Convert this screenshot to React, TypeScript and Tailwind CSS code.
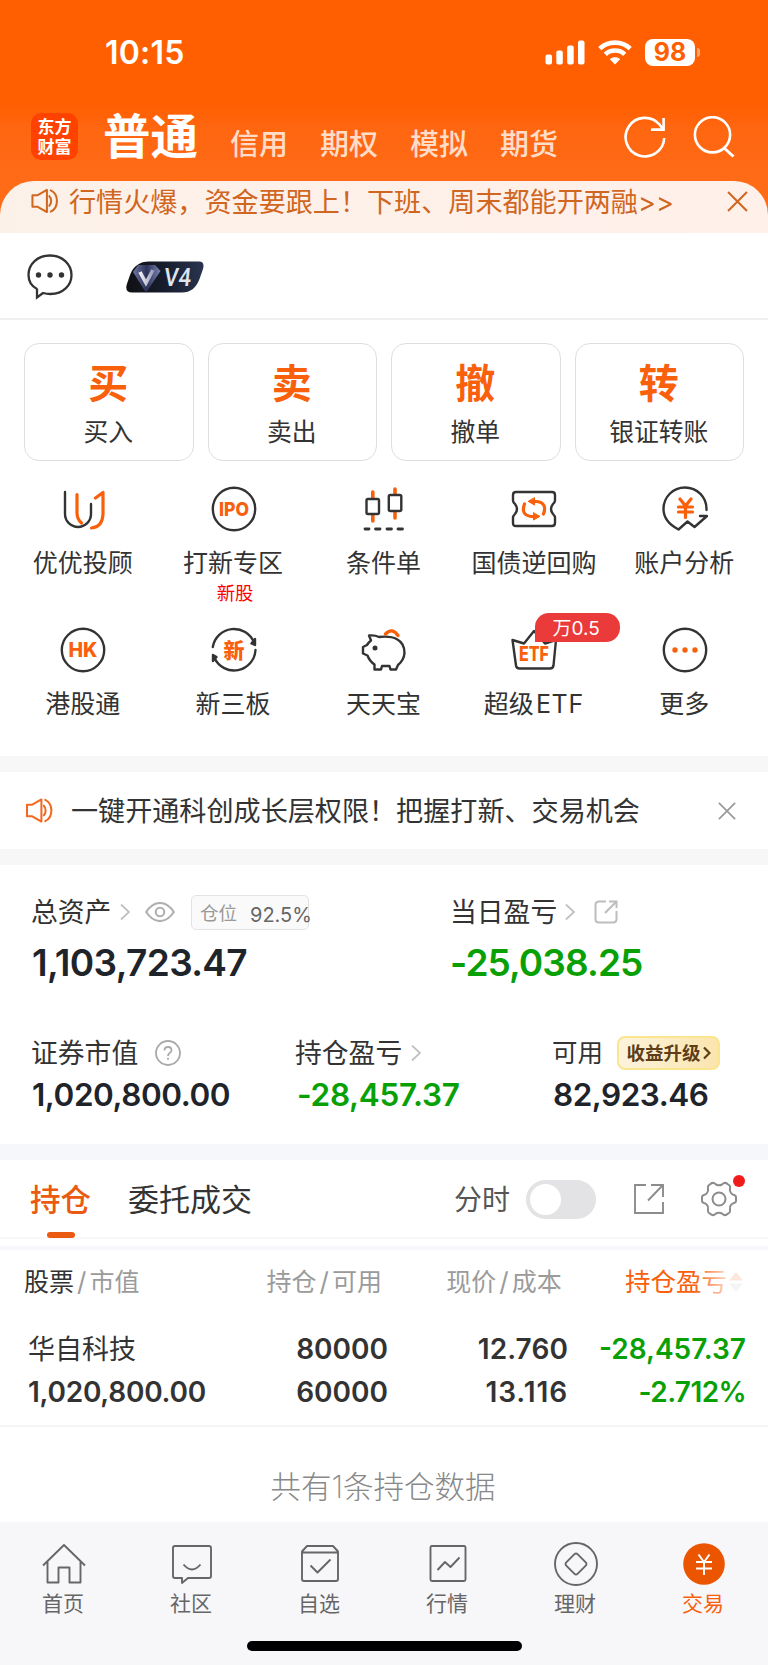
import React from 'react';

const ORANGE = '#f9600b';
const INK = '#333333';

const SpeakerIcon: React.FC<{ className?: string }> = ({ className }) => (
    <svg viewBox="0 0 28 26" fill="none" stroke="currentColor" strokeWidth="2.1" strokeLinejoin="round" className={className}>
        <path d="M1.5 7H7L16.5 1.5V24.5L7 19H1.5Z" />
        <path d="M19 8C21.5 10.5 21.5 15.5 19 18" strokeLinecap="round" />
        <path d="M20.5 2C29 6 29 20 20.5 24" strokeLinecap="round" />
    </svg>
);

const CloseIcon: React.FC<{ className?: string }> = ({ className }) => (
    <svg viewBox="0 0 20 20" fill="none" stroke="currentColor" strokeWidth="1.9" className={className}>
        <path d="M1 1L19 19M19 1L1 19" />
    </svg>
);

const Chevron: React.FC<{ className?: string }> = ({ className }) => (
    <svg viewBox="0 0 10 16" fill="none" stroke="#c0c0c0" strokeWidth="1.8" className={`w-[10px] h-4 shrink-0 ${className ?? ''}`}>
        <path d="M1 0.5L9 8L1 15.5" />
    </svg>
);

const StatusBar: React.FC = () => (
    <div className="flex items-center h-[105px] pl-[105px] pr-[68px] text-white">
        <span className="text-[32px] font-semibold leading-none tracking-[0.2px]">10:15</span>
        <div className="ml-auto flex items-center -mt-px">
            <svg viewBox="0 0 40 25" className="w-10 h-[25px]" fill="white">
                <rect x="0.5" y="14.5" width="6.5" height="10" rx="2" />
                <rect x="11.3" y="10.5" width="6.5" height="14" rx="2" />
                <rect x="22.2" y="5.5" width="6.5" height="19" rx="2" />
                <rect x="33" y="0.5" width="6.5" height="24" rx="2" />
            </svg>
            <svg viewBox="0 0 34 25" className="ml-[13px] w-[34px] h-[25px]" fill="none" stroke="white" strokeWidth="4.6">
                <path d="M1.8 8.6C10 0.6 24 0.6 32.2 8.6" />
                <path d="M7.3 14.3C12.5 9.2 21.5 9.2 26.7 14.3" />
                <path d="M17 24.5L11.9 19.2C14.6 16.6 19.4 16.6 22.1 19.2Z" fill="white" stroke="none" />
            </svg>
            <div className="ml-[13px] w-[50px] h-[27px] rounded-[8px] bg-white flex items-center justify-center text-[25px] font-bold leading-none text-[#ff5f00]">98</div>
            <div className="ml-[2px] w-[3px] h-[9px] rounded-r-full bg-[#ffa56f]" />
        </div>
    </div>
);

const AccountTabs: React.FC = () => (
    <div className="h-[76px] flex pl-[31px] pr-[33px] pt-[8px] text-white bg-linear-to-b from-[#ff5f00] from-0% via-[#ff6610] via-30% to-[#ff6b17]">
        <div className="w-[47px] h-[47px] rounded-[10px] bg-[#ff4200] pt-[3px] text-center font-['Noto_Sans_CJK_SC',sans-serif] text-[17px] font-bold leading-[20px]">
            东方<br />财富
        </div>
        <span className="ml-[25px] text-[47.5px] font-bold leading-[47px] w-[95px]">普通</span>
        <div className="ml-[32px] mt-[17px] flex gap-[32px] text-[29px] leading-[29px] font-medium text-[#ffddc9]">
            {['信用', '期权', '模拟', '期货'].map((t) => <span key={t} className="w-[58px]">{t}</span>)}
        </div>
        <svg viewBox="0 0 42 42" className="ml-auto mt-[3px] w-[42px] h-[42px]" fill="none" stroke="white" strokeWidth="2.6">
            <path d="M40.2 22A19.3 19.3 0 1 1 35.5 8.5L39 13" />
            <path d="M39.6 2V13.6H27" />
        </svg>
        <svg viewBox="0 0 42 42" className="ml-[27px] mt-[3px] w-[42px] h-[42px]" fill="none" stroke="white" strokeWidth="2.6">
            <circle cx="19.5" cy="18.8" r="17.6" />
            <path d="M31 32L40.5 40.5" strokeWidth="3" />
        </svg>
    </div>
);

const PromoBanner: React.FC = () => (
    <div className="bg-[#ff6b17]">
        <div className="h-[52px] rounded-t-[34px] bg-linear-to-r from-[#fcf1e8] to-[#fff0ea] flex items-start pl-[31px] pr-[20px] pt-[7px] text-[#d0661f]">
            <SpeakerIcon className="w-[27px] h-[26px]" />
            <span className="ml-[11px] mt-px text-[27.1px] leading-[27px] whitespace-nowrap">行情火爆，资金要跟上！下班、周末都能开两融&gt;&gt;</span>
            <CloseIcon className="ml-auto mt-[3px] w-[21px] h-[21px]" />
        </div>
    </div>
);

const VipRow: React.FC = () => (
    <div className="h-[87px] border-b-2 border-[#efefef] flex items-center pl-[27px]">
        <svg viewBox="0 0 46 46" className="w-[46px] h-[46px] mt-[3px]" fill="none" stroke={INK} strokeWidth="2.3">
            <path d="M10 34.5V43.5L16 39C19 39.8 21 40 23.5 40C36 40 44.5 31.5 44.5 21C44.5 10 35 1.5 23 1.5C10.5 1.5 1.5 10 1.5 21C1.5 27 4.5 32 10 35" />
            <g fill={INK} stroke="none"><circle cx="11.5" cy="21" r="2.7" /><circle cx="23" cy="21" r="2.7" /><circle cx="34.5" cy="21" r="2.7" /></g>
        </svg>
        <svg viewBox="0 0 78 32" className="ml-[53px] mt-[2px] w-[78px] h-8">
            <defs>
                <linearGradient id="vip" x1="0" x2="1"><stop offset="0" stopColor="#101014" /><stop offset="0.5" stopColor="#171d2c" /><stop offset="1" stopColor="#29344f" /></linearGradient>
                <linearGradient id="gem" x1="0" x2="1"><stop offset="0" stopColor="#6d76a0" /><stop offset="0.5" stopColor="#2c3157" /><stop offset="1" stopColor="#7c86b5" /></linearGradient>
                <linearGradient id="silver" x1="0" x2="1"><stop offset="0" stopColor="#f2f2f6" /><stop offset="1" stopColor="#9a9db8" /></linearGradient>
            </defs>
            <path d="M23 0.5H73Q79 0.5 77 8L73.5 18Q68.5 31.5 56 31.5H6Q-1 31.5 0.6 24L4 14Q9 0.5 23 0.5Z" fill="url(#vip)" />
            <path d="M12 4H29L34.5 10L20 31.5L7 11Z" fill="url(#gem)" />
            <path d="M14 11L20 22L27 9" fill="none" stroke="url(#silver)" strokeWidth="3.6" />
            <text x="38" y="25" fill="#dfe4f0" fontSize="25.5" fontWeight="500" textLength="27" lengthAdjust="spacingAndGlyphs" fontFamily="Roboto, sans-serif" transform="skewX(-6) translate(2 0)">V4</text>
        </svg>
    </div>
);

const trades = [
    ['买', '买入'],
    ['卖', '卖出'],
    ['撤', '撤单'],
    ['转', '银证转账'],
];

const TradeButtons: React.FC = () => (
    <div className="mt-[23px] px-6 grid grid-cols-4 gap-[14px]">
        {trades.map(([glyph, label]) => (
            <div key={label} className="h-[118px] rounded-[15px] border-[1.5px] border-[#dedede] flex flex-col items-center pt-[20px] pr-px">
                <span className="text-[40px] leading-[40px] font-bold text-[#f9600b]">{glyph}</span>
                <span className="mt-[15px] text-[24.8px] leading-[26px] text-[#333]">{label}</span>
            </div>
        ))}
    </div>
);

const iconText = { fill: ORANGE, fontWeight: 800, textAnchor: 'middle' as const, fontFamily: 'Inter, "Noto Sans CJK SC", sans-serif' };

const services: { label: string; tag?: string; badge?: string; icon: React.ReactNode }[] = [
    {
        label: '优优投顾',
        icon: (
            <>
                <path d="M5 6V28A13 13 0 0 0 31 28V18" />
                <path d="M17 8.5V27Q17 33 21.5 37" stroke={ORANGE} strokeWidth="3.2" />
                <path d="M35.5 12L43 6.5V28Q42.5 41 31.5 42" stroke={ORANGE} strokeWidth="3.2" />
            </>
        ),
    },
    {
        label: '打新专区',
        tag: '新股',
        icon: (
            <>
                <circle cx="23" cy="23" r="21.2" />
                <text x="23" y="30" fontSize="19" stroke="none" textLength="30" lengthAdjust="spacingAndGlyphs" {...iconText}>IPO</text>
            </>
        ),
    },
    {
        label: '条件单',
        icon: (
            <>
                <path d="M11.8 6V12M11.8 29V35M34 3V8M34 26V32" stroke={ORANGE} strokeWidth="3.6" />
                <rect x="5.5" y="13" width="12.5" height="15" rx="1.5" />
                <rect x="27.8" y="9" width="12.5" height="16" rx="1.5" />
                <path d="M4 43H8M14.5 43H19M26 43H30.5M37 43H41.5" strokeWidth="2.8" />
            </>
        ),
    },
    {
        label: '国债逆回购',
        icon: (
            <>
                <path d="M5 6H41Q44 6 44 9V14.500Q44 16 42 18Q38 23 42 28Q44 30 44 31.500V37Q44 40 41 40H5Q2 40 2 37V31.500Q2 30 4 28Q8 23 4 18Q2 16 2 14.500V9Q2 6 5 6Z" />
                <path d="M13.5 18Q9.5 29 20 30.5H26M32.500 28Q36.5 17 26 15.5H20" stroke={ORANGE} strokeWidth="3.2" />
                <path d="M23.5 12V19L17.5 15.5ZM22.5 27V34L28.5 30.5Z" fill={ORANGE} stroke={ORANGE} strokeWidth="1" />
            </>
        ),
    },
    {
        label: '账户分析',
        icon: (
            <>
                <path d="M44.5 24C45 11 35 1.5 23 1.5C11 1.5 1.5 11 1.5 23C1.5 32 7 38.5 16.5 43.5L25.5 35.5L32.5 41L45 30H38" />
                <path d="M18 13L23.5 20L29 13M16.5 21H30.5M16.5 26H30.5M23.5 20V31.5" stroke={ORANGE} strokeWidth="3.2" />
            </>
        ),
    },
    {
        label: '港股通',
        icon: (
            <>
                <circle cx="23" cy="23" r="21.2" />
                <text x="23" y="30" fontSize="19.5" stroke="none" {...iconText}>HK</text>
            </>
        ),
    },
    {
        label: '新三板',
        icon: (
            <>
                <path d="M1.8 20A21.5 21.5 0 0 1 43 15.5M44.5 23A21.5 21.5 0 0 1 3.5 31" />
                <path d="M44 12V18L40.5 16.5ZM2 34V28L5.5 30Z" fill={INK} />
                <text x="23" y="30.5" fontSize="21" stroke="none" {...iconText}>新</text>
            </>
        ),
    },
    {
        label: '天天宝',
        icon: (
            <>
                <path d="M18 10C32 8.500 43.500 12 43.500 26Q43 33 37 38L35 42.500H29.500L28.500 39H21L20 42.500H13.500V37.500Q8.500 34 6.500 28.500L2 26.500V20L6 18Q8 15 10 13.500L8 8.500Q14 8 18 10Z" />
                <circle cx="14" cy="21" r="2.5" fill={INK} stroke="none" />
                <path d="M24.500 7Q31 0 37 8.500" stroke={ORANGE} strokeWidth="3.4" />
            </>
        ),
    },
    {
        label: '超级ETF',
        badge: '万0.5',
        icon: (
            <>
                <path d="M1.5 13L13 16.5L23 4L34 16.5L45 13L42.5 38.5Q42 41.5 39 41.5H8.5Q5.5 41.5 5 38.5Z" />
                <text x="23" y="34" fontSize="20" stroke="none" textLength="30" lengthAdjust="spacingAndGlyphs" {...iconText}>ETF</text>
            </>
        ),
    },
    {
        label: '更多',
        icon: (
            <>
                <circle cx="23" cy="23" r="21.2" />
                <g fill={ORANGE} stroke="none"><circle cx="13" cy="23" r="2.7" /><circle cx="23" cy="23" r="2.7" /><circle cx="33" cy="23" r="2.7" /></g>
            </>
        ),
    },
];

const ServiceGrid: React.FC = () => (
    <div className="mt-[25px] h-[270px] px-2 grid grid-cols-5 auto-rows-[141px]">
        {services.map((s) => (
            <div key={s.label} className="relative flex flex-col items-center">
                <svg viewBox="0 0 46 46" className="w-[46px] h-[46px]" fill="none" stroke={INK} strokeWidth="2.4" strokeLinecap="round" strokeLinejoin="round">{s.icon}</svg>
                <span className="mt-[18px] mr-px text-[25px] leading-[26px] text-[#333] whitespace-nowrap">
                    {s.label.replace('ETF', '')}
                    {s.label.endsWith('ETF') && <span className="ml-[2px] tracking-[0.7px]">ETF</span>}
                </span>
                {s.tag && <span className="mt-[7px] ml-[3px] text-[18.4px] leading-[20px] text-[#ff0000]">{s.tag}</span>}
                {s.badge && (
                    <span className="absolute top-[-14px] left-[76px] w-[85px] h-[29px] rounded-[14px] rounded-bl-none bg-[#ea3a3a] text-white text-[19px] leading-[31px] pr-[3px] text-center">{s.badge}</span>
                )}
            </div>
        ))}
    </div>
);

const Notice: React.FC = () => (
    <div className="h-[109px] border-y-[16px] border-[#f7f7f7] flex items-center pl-[25px] pr-8">
        <SpeakerIcon className="w-[28px] h-[25px] text-[#f0691e]" />
        <span className="ml-[18px] mt-[2px] text-[27.1px] leading-none text-[#333] whitespace-nowrap">一键开通科创成长层权限！把握打新、交易机会</span>
        <CloseIcon className="ml-auto w-[18px] h-[18px] text-[#999]" />
    </div>
);

const Assets: React.FC = () => (
    <div className="h-[279px] pl-[31px] pt-[29px] text-[26.8px] leading-none text-[#333]">
        <div className="flex">
            <div className="w-[419px]">
                <div className="flex items-center h-9">
                    <span className="w-[81px] mt-px whitespace-nowrap">总资产</span>
                    <Chevron className="ml-[8px]" />
                    <svg viewBox="0 0 30 20" className="ml-[15px] w-[30px] h-5" fill="none" stroke="#b0b0b0" strokeWidth="2.1">
                        <path d="M1.2 10Q7 1 15 1Q23 1 28.8 10Q23 19 15 19Q7 19 1.2 10Z" />
                        <circle cx="15" cy="10" r="4.3" />
                    </svg>
                    <div className="ml-[16px] w-[118px] h-[35px] rounded-[5px] border border-[#e3e3e3] bg-[#fafafa] flex items-center pl-[8px] text-[18.5px] whitespace-nowrap">
                        <span className="mt-[2px] text-[#999]">仓位</span>
                        <span className="ml-[13px] mt-[6px] text-[20px] text-[#666]">92.5%</span>
                    </div>
                </div>
                <div className="mt-[14px] ml-px text-[37px] font-semibold tracking-[-0.65px] text-[#1f242a]">1,103,723.47</div>
            </div>
            <div>
                <div className="flex items-center h-9">
                    <span className="w-[107px] mt-px whitespace-nowrap">当日盈亏</span>
                    <Chevron className="ml-[8px]" />
                    <svg viewBox="0 0 24 24" className="ml-[19px] w-6 h-6" fill="none" stroke="#bdbdbd" strokeWidth="2">
                        <path d="M12 1.5H5Q1.5 1.5 1.5 5V19Q1.5 22.5 5 22.5H19Q22.5 22.5 22.5 19V11" />
                        <path d="M11 13L22 2M15 1.5H22.5V8" />
                    </svg>
                </div>
                <div className="mt-[14px] text-[37px] font-semibold tracking-[-0.9px] text-[#08a005]">-25,038.25</div>
            </div>
        </div>
        <div className="mt-[54px] flex">
            <div className="w-[264px]">
                <div className="flex items-center h-9">
                    <span>证券市值</span>
                    <svg viewBox="0 0 26 26" className="ml-[17px] w-[26px] h-[26px]" fill="none" stroke="#aaa" strokeWidth="1.8">
                        <circle cx="13" cy="13" r="12" />
                        <path d="M9.5 10.5Q9.5 7 13 7Q16.5 7 16.5 10.2Q16.5 12 14.5 13.3Q13 14.5 13 16M13 17.8V19.8" />
                    </svg>
                </div>
                <div className="mt-[8px] ml-px text-[31.5px] font-semibold tracking-[-0.45px] text-[#1f242a]">1,020,800.00</div>
            </div>
            <div className="w-[257px]">
                <div className="flex items-center h-9">
                    <span>持仓盈亏</span>
                    <Chevron className="ml-[9px]" />
                </div>
                <div className="mt-[8px] ml-[2px] text-[31.5px] font-semibold tracking-[-0.3px] text-[#08a005]">-28,457.37</div>
            </div>
            <div>
                <div className="flex items-center h-9">
                    <span className="text-[25.5px]">可用</span>
                    <span className="ml-[14px] w-[103px] h-[34px] rounded-[8px] border-2 border-[#fbe58f] bg-linear-to-r from-[#fcf3dc] to-[#fbe5ae] flex items-center justify-center text-[18.5px] font-bold text-[#5e3d17]">
                        收益升级
                        <svg viewBox="0 0 8 14" className="ml-[2px] w-2 h-[14px]" fill="none" stroke="#5e3d17" strokeWidth="2.2"><path d="M1 1.5L6.5 7L1 12.5" /></svg>
                    </span>
                </div>
                <div className="mt-[8px] ml-px text-[31.5px] font-semibold tracking-[-0.5px] text-[#1f242a]">82,923.46</div>
            </div>
        </div>
    </div>
);

const PositionTabs: React.FC = () => (
    <div className="h-[106px] border-t-[16px] border-[#f5f7fa] border-b-4">
        <div className="h-[79px] border-b-2 border-b-[#f7f8fa] flex items-center pl-[30px] pr-[30px] leading-none text-[#333]">
            <div className="relative mt-[3px] text-[30.5px] font-medium text-[#ea5a10]">
                持仓
                <div className="absolute left-[17px] top-[47px] w-[28px] h-[6px] rounded-full bg-[#ea5a10]" />
            </div>
            <span className="ml-[37px] mt-[2px] text-[31px]">委托成交</span>
            <span className="ml-auto mt-[2px] text-[28px] text-[#555]">分时</span>
            <div className="ml-[16px] mt-px w-[70px] h-[39px] rounded-full bg-[#e3e3e5] p-[4px]">
                <div className="w-[31px] h-[31px] rounded-full bg-white" />
            </div>
            <svg viewBox="0 0 30 30" className="ml-[38px] w-[30px] h-[30px]" fill="none" stroke="#8c8c8c" strokeWidth="1.9">
                <path d="M12 1H1V29H29V18M29 13V1H17M28.5 1.5L14 16.5" />
            </svg>
            <div className="relative ml-[36px]">
                <svg viewBox="0 0 38 38" className="w-[38px] h-[38px]" fill="none" stroke="#8c8c8c" strokeWidth="2" strokeLinejoin="round">
                    <path d="M10.500 4Q12 2.500 14 3L16 4.500Q19 6 22 4.500L24 3Q26 2.500 27.500 4L29.500 5.500Q30.500 6.500 30 9Q29.500 11.500 31 13Q32 14.500 34 15Q36 15.500 36 17V21Q36 22.500 34 23Q32 23.500 31 25Q29.500 26.500 30 29Q30.500 31.500 29.500 32.500L27.500 34Q26 35.500 24 35L22 33.500Q19 32 16 33.500L14 35Q12 35.500 10.500 34L8.500 32.500Q7.500 31.500 8 29Q8.500 26.500 7 25Q6 23.500 4 23Q2 22.500 2 21V17Q2 15.500 4 15Q6 14.500 7 13Q8.500 11.500 8 9Q7.500 6.500 8.500 5.500Z" />
                    <circle cx="19" cy="19" r="6.5" />
                </svg>
                <div className="absolute right-[-7px] top-[-5px] w-3 h-3 rounded-full bg-[#f01c1c]" />
            </div>
        </div>
    </div>
);

const HoldingsTable: React.FC = () => (
    <div className="h-[177px] border-b-2 border-[#f5f6f8] text-[#333]">
        <div className="pt-[18px] h-[78px] flex items-start pl-6 pr-6 text-[25px] leading-[28px] text-[#9b9b9b] whitespace-nowrap">
            <span className="w-[243px]"><span className="text-[#333]">股票</span><span className="mx-[3px] text-[26px]">/</span>市值</span>
            <span className="w-[180px]">持仓<span className="mx-[3px] text-[26px]">/</span>可用</span>
            <span className="w-[179px]">现价<span className="mx-[3px] text-[26px]">/</span>成本</span>
            <div className="relative flex items-center text-[25.5px] text-[#f9600b]">
                持仓盈亏
                <svg viewBox="0 0 16 22" className="ml-[1px] w-4 h-[22px]">
                    <path d="M8 1L15 9.5H1Z" fill="#f9600b" />
                    <path d="M8 21L15 12.5H1Z" fill="#bbb" />
                </svg>
                <div className="absolute right-0 top-0 w-[50px] h-7 bg-linear-to-r from-white/0 to-white/85 to-75%" />
            </div>
        </div>
        <div className="flex pl-[28px] pr-[22px] text-[28px] leading-[43px] font-semibold">
            <div className="w-[200px]">
                <div className="text-[27px] font-normal">华自科技</div>
                <div className="tracking-[-0.25px]">1,020,800.00</div>
            </div>
            <div className="w-[160px] text-right"><div>80000</div><div>60000</div></div>
            <div className="w-[180px] text-right"><div className="tracking-[0.1px]">12.760</div><div className="tracking-[0.9px]">13.116</div></div>
            <div className="ml-auto text-right text-[#08a005]"><div>-28,457.37</div><div className="tracking-[-0.6px]">-2.712%</div></div>
        </div>
    </div>
);

const navItems: { label: string; icon: React.ReactNode }[] = [
    { label: '首页', icon: <path d="M1 23.5L22 3L43 23.5M5.5 20V40.5H16.5V25.5H27.5V40.5H38.5V20" /> },
    {
        label: '社区',
        icon: <path d="M5 4H39Q41 4 41 6V34Q41 36 39 36H18L12 41V36H5Q3 36 3 34V6Q3 4 5 4ZM13.5 22.5Q22 32.5 30.5 22.5" />,
    },
    {
        label: '自选',
        icon: <path d="M9 4H35L40 9.5V37Q40 39 38 39H6Q4 39 4 37V9.5ZM4 10.5H40M12.5 23.5L19.5 30.5L32.5 17.5" />,
    },
    {
        label: '行情',
        icon: <path d="M6 4H38Q39.5 4 39.5 5.5V37.5Q39.5 39 38 39H6Q4.5 39 4.5 37.5V5.5Q4.5 4 6 4ZM11.5 28L19 20L24.5 25L33.5 15.5" />,
    },
    {
        label: '理财',
        icon: (
            <>
                <circle cx="22" cy="22" r="21" />
                <path d="M20.5 12.2Q22 10.7 23.5 12.2L32 20.7Q33 22 32 23.3L23.5 31.8Q22 33.3 20.5 31.8L12 23.3Q11 22 12 20.7Z" />
            </>
        ),
    },
    {
        label: '交易',
        icon: (
            <>
                <circle cx="22" cy="22" r="20.8" fill="#ec5500" stroke="none" />
                <path d="M16.5 12.5L22 20L27.5 12.5M14 20H30M14 26.5H30M22 20V33" stroke="white" strokeWidth="2" />
            </>
        ),
    },
];

const BottomNav: React.FC = () => (
    <div className="h-[143px] bg-[#f7f7fa] flex flex-col items-center">
        <div className="w-full grid grid-cols-6 pt-[20px]">
            {navItems.map((n) => (
                <div key={n.label} className={`flex flex-col items-center ${n.label === '交易' ? 'text-[#f9600b]' : 'text-[#666]'}`}>
                    <svg viewBox="0 0 44 44" className="w-11 h-11" fill="none" stroke="currentColor" strokeWidth="1.9" strokeLinejoin="round">{n.icon}</svg>
                    <span className="mt-[7px] mr-[2px] text-[21px] leading-[22px]">{n.label}</span>
                </div>
            ))}
        </div>
        <div className="mt-[26px] w-[275px] h-[10px] rounded-full bg-black" />
    </div>
);

const App: React.FC = () => (
    <div className="w-[768px] h-[1665px] overflow-hidden bg-white font-['Inter','Noto_Sans_CJK_SC',sans-serif]">
        <div className="bg-[#ff5f00]">
            <StatusBar />
            <AccountTabs />
        </div>
        <PromoBanner />
        <VipRow />
        <TradeButtons />
        <ServiceGrid />
        <Notice />
        <Assets />
        <PositionTabs />
        <HoldingsTable />
        <div className="h-[95px] pt-[45px] pr-[2px] text-center text-[30.5px] leading-[30px] font-extralight text-[#888]">共有1条持仓数据</div>
        <BottomNav />
    </div>
);

export default App;
